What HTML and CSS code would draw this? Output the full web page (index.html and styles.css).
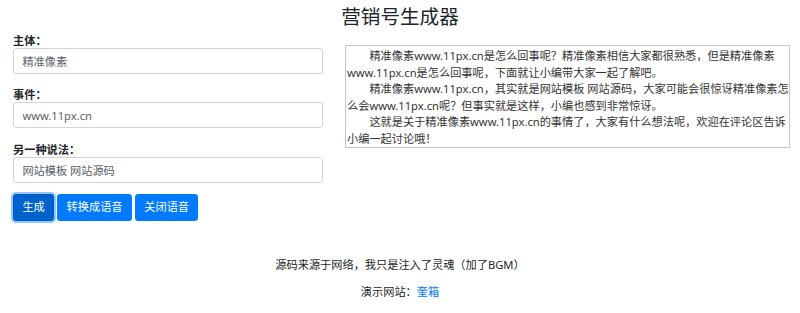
FILE: index.html
```html
<!DOCTYPE html>
<html lang="zh-CN">
<head>
  <meta charset="UTF-8">
  <title>营销号生成器</title>
  <link rel="stylesheet" href="styles.css">
</head>
<body>
  <h2 class="title">营销号生成器</h2>

  <div class="main">
    <div class="form-side">
      <div class="field">
        <label for="subject">主体：</label>
        <input type="text" id="subject" value="精准像素">
      </div>
      <div class="field">
        <label for="event">事件：</label>
        <input type="text" id="event" value="www.11px.cn">
      </div>
      <div class="field">
        <label for="other">另一种说法：</label>
        <input type="text" id="other" value="网站模板 网站源码">
      </div>
      <div class="actions">
        <button class="btn btn-active">生成</button>
        <button class="btn">转换成语音</button>
        <button class="btn">关闭语音</button>
      </div>
    </div>

    <div class="result">
      <p>精准像素www.11px.cn是怎么回事呢？精准像素相信大家都很熟悉，但是精准像素www.11px.cn是怎么回事呢，下面就让小编带大家一起了解吧。</p>
      <p>精准像素www.11px.cn，其实就是网站模板 网站源码，大家可能会很惊讶精准像素怎么会www.11px.cn呢？但事实就是这样，小编也感到非常惊讶。</p>
      <p>这就是关于精准像素www.11px.cn的事情了，大家有什么想法呢，欢迎在评论区告诉小编一起讨论哦！</p>
    </div>
  </div>

  <div class="footer">
    <p>源码来源于网络，我只是注入了灵魂（加了BGM）</p>
    <p>演示网站：<a href="#">奎箱</a></p>
  </div>
</body>
</html>
```

FILE: styles.css
```css
body { margin: 0; font-family: "Noto Sans", "Noto Sans CJK SC", sans-serif; font-size: 11.2px; line-height: 16.8px; color: #212529; background: #fff; }

.title { margin: 0; padding-top: 4px; font-size: 19.6px; font-weight: 400; line-height: 26px; text-align: center; }

.main { display: grid; grid-template-columns: 310px 445px; column-gap: 22px; padding: 4px 0 0 13px; }

.field { margin-bottom: 14px; }
.field:nth-child(2) { margin-bottom: 15px; }
.field label { display: block; font-weight: bold; line-height: 14px; }
.field input { display: block; box-sizing: border-box; width: 310px; height: 26px; padding: 0 8.4px; border: 1px solid #ced4da; border-radius: 2.8px; font-family: inherit; font-size: 11.2px; color: #5a6268; background: #fff; }

.actions { display: flex; gap: 3px; margin-top: -3px; }
.btn { padding: 4.2px 8.4px; border: 1px solid #007bff; border-radius: 2.8px; background: #007bff; color: #fff; font-family: inherit; font-size: 11.2px; line-height: 16.8px; cursor: pointer; }
.btn-active { background: #0062cc; border-color: #005cbf; box-shadow: 0 0 0 2px rgba(38, 143, 255, 0.5); }

.result { align-self: start; margin-top: 11px; padding: 2px 0 0 1px; border: 1px solid #c6c6c6; color: #333; line-height: 16.5px; }
.result p { margin: 0; text-indent: 2em; }

.footer { margin-top: 35.6px; text-align: center; }
.footer p { margin: 0 0 10.2px; }
.footer a { color: #007bff; text-decoration: none; }
```
